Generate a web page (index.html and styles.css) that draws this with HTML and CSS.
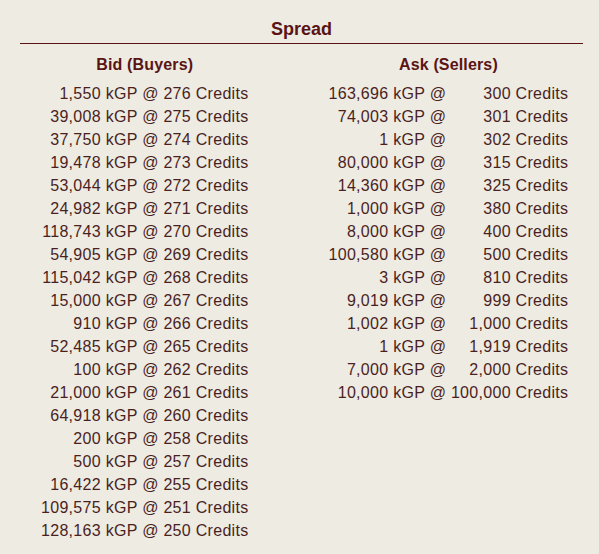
FILE: index.html
```html
<!DOCTYPE html>
<html>
<head>
<meta charset="utf-8">
<link rel="stylesheet" href="styles.css">
</head>
<body>
<div class="panel">
  <h2 class="title">Spread</h2>
  <div class="cols">
    <div class="col bid">
      <h3 class="head">Bid (Buyers)</h3>
      <table class="book">
        <tr><td class="amt">1,550 kGP @</td><td class="cr">276 Credits</td></tr>
        <tr><td class="amt">39,008 kGP @</td><td class="cr">275 Credits</td></tr>
        <tr><td class="amt">37,750 kGP @</td><td class="cr">274 Credits</td></tr>
        <tr><td class="amt">19,478 kGP @</td><td class="cr">273 Credits</td></tr>
        <tr><td class="amt">53,044 kGP @</td><td class="cr">272 Credits</td></tr>
        <tr><td class="amt">24,982 kGP @</td><td class="cr">271 Credits</td></tr>
        <tr><td class="amt">118,743 kGP @</td><td class="cr">270 Credits</td></tr>
        <tr><td class="amt">54,905 kGP @</td><td class="cr">269 Credits</td></tr>
        <tr><td class="amt">115,042 kGP @</td><td class="cr">268 Credits</td></tr>
        <tr><td class="amt">15,000 kGP @</td><td class="cr">267 Credits</td></tr>
        <tr><td class="amt">910 kGP @</td><td class="cr">266 Credits</td></tr>
        <tr><td class="amt">52,485 kGP @</td><td class="cr">265 Credits</td></tr>
        <tr><td class="amt">100 kGP @</td><td class="cr">262 Credits</td></tr>
        <tr><td class="amt">21,000 kGP @</td><td class="cr">261 Credits</td></tr>
        <tr><td class="amt">64,918 kGP @</td><td class="cr">260 Credits</td></tr>
        <tr><td class="amt">200 kGP @</td><td class="cr">258 Credits</td></tr>
        <tr><td class="amt">500 kGP @</td><td class="cr">257 Credits</td></tr>
        <tr><td class="amt">16,422 kGP @</td><td class="cr">255 Credits</td></tr>
        <tr><td class="amt">109,575 kGP @</td><td class="cr">251 Credits</td></tr>
        <tr><td class="amt">128,163 kGP @</td><td class="cr">250 Credits</td></tr>
      </table>
    </div>
    <div class="col ask">
      <h3 class="head">Ask (Sellers)</h3>
      <table class="book">
        <tr><td class="amt">163,696 kGP @</td><td class="cr">300 Credits</td></tr>
        <tr><td class="amt">74,003 kGP @</td><td class="cr">301 Credits</td></tr>
        <tr><td class="amt">1 kGP @</td><td class="cr">302 Credits</td></tr>
        <tr><td class="amt">80,000 kGP @</td><td class="cr">315 Credits</td></tr>
        <tr><td class="amt">14,360 kGP @</td><td class="cr">325 Credits</td></tr>
        <tr><td class="amt">1,000 kGP @</td><td class="cr">380 Credits</td></tr>
        <tr><td class="amt">8,000 kGP @</td><td class="cr">400 Credits</td></tr>
        <tr><td class="amt">100,580 kGP @</td><td class="cr">500 Credits</td></tr>
        <tr><td class="amt">3 kGP @</td><td class="cr">810 Credits</td></tr>
        <tr><td class="amt">9,019 kGP @</td><td class="cr">999 Credits</td></tr>
        <tr><td class="amt">1,002 kGP @</td><td class="cr">1,000 Credits</td></tr>
        <tr><td class="amt">1 kGP @</td><td class="cr">1,919 Credits</td></tr>
        <tr><td class="amt">7,000 kGP @</td><td class="cr">2,000 Credits</td></tr>
        <tr><td class="amt">10,000 kGP @</td><td class="cr">100,000 Credits</td></tr>
      </table>
    </div>
  </div>
</div>
</body>
</html>
```

FILE: styles.css
```css
html, body {
  margin: 0;
  padding: 0;
  background: #eeebe2;
}
body {
  font-family: "Liberation Sans", Arial, sans-serif;
  color: #4a1f1f;
  height: 554px;
}
.panel {
  width: 563px;
  margin-left: 20px;
  padding-top: 18px;
}
.title {
  margin: 0;
  font-size: 18px;
  line-height: 22px;
  font-weight: bold;
  color: #5a1414;
  text-align: center;
  padding-bottom: 3px;
  border-bottom: 1px solid #5a1414;
}
.cols {
  display: flex;
  align-items: flex-start;
  padding-top: 9px;
}
.col {
  display: flex;
  flex-direction: column;
}
.bid {
  margin-left: 21px;
}
.ask {
  margin-left: 80px;
}
.head {
  margin: 0 0 6px 0;
  font-size: 16px;
  line-height: 23px;
  font-weight: bold;
  letter-spacing: 0.15px;
  color: #5a1414;
  text-align: center;
}
.book {
  border-collapse: collapse;
  font-size: 16px;
  line-height: 23px;
  letter-spacing: 0.3px;
}
.book td {
  padding: 0;
  text-align: right;
  white-space: nowrap;
}
.book td.cr {
  padding-left: 4.7px;
}
```
